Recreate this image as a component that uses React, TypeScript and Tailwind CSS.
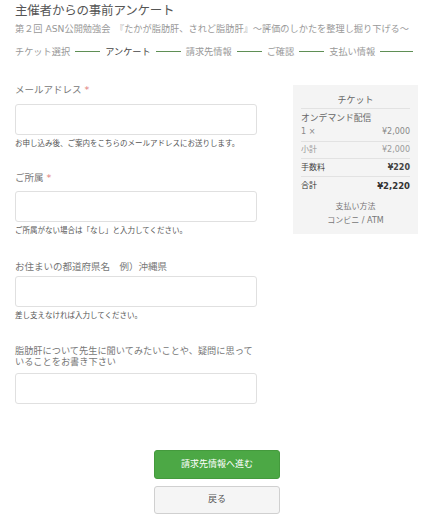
import React from 'react'

const font = { fontFamily: '"DejaVu Sans", "Noto Sans CJK JP", sans-serif' }

function Field({
  label,
  required,
  help,
  className,
  labelClass,
  inputClass,
}: {
  label: React.ReactNode
  required?: boolean
  help?: string
  className?: string
  labelClass?: string
  inputClass?: string
}) {
  return (
    <div className={className}>
      <div className={`text-[#777] ${labelClass ?? 'text-[9.5px] leading-[12px]'}`}>
        {label}
        {required && <span className="ml-[3px] text-[#e07a7a]">*</span>}
      </div>
      <div className={`h-[31px] w-full rounded-[3px] border border-[#e0e0e0] bg-white ${inputClass ?? ''}`} />
      {help && <div className="mt-[4px] text-[7.5px] leading-[10px] text-[#555]">{help}</div>}
    </div>
  )
}

function Step({ label, active }: { label: string; active?: boolean }) {
  return <span className={active ? 'text-[#444]' : 'text-[#999]'}>{label}</span>
}

function Line({ grow }: { grow?: boolean }) {
  return <span className={`h-px bg-[#5f8f55] ${grow ? 'flex-1' : 'w-[25px]'}`} />
}

export default function App() {
  return (
    <div className="min-h-[520px] w-[428px] bg-white text-[#666]" style={font}>
      {/* header */}
      <div className="px-[15px] pt-[4px]">
        <h1 className="text-[12.5px] font-normal leading-[14px] tracking-[-0.2px] text-[#555]">主催者からの事前アンケート</h1>
        <p className="mt-[5px] text-[9.2px] leading-[11px] text-[#999]">
          第２回 ASN公開勉強会　『たかが脂肪肝、されど脂肪肝』～評価のしかたを整理し掘り下げる～
        </p>
        <div className="mt-[12px] flex items-center gap-[5px] text-[9.2px] leading-[11px]">
          <Step label="チケット選択" />
          <Line />
          <Step label="アンケート" active />
          <Line />
          <Step label="請求先情報" />
          <Line />
          <Step label="ご確認" />
          <Line />
          <Step label="支払い情報" />
          <Line grow />
        </div>
      </div>

      {/* body */}
      <div className="mt-[27px] flex pl-[15px]">
        <div className="w-[242px]">
          <Field
            label="メールアドレス"
            required
            help="お申し込み後、ご案内をこちらのメールアドレスにお送りします。"
            inputClass="mt-[8px] h-[30px]"
          />
          <Field
            className="mt-[23px]"
            label="ご所属"
            required
            help="ご所属がない場合は「なし」と入力してください。"
            inputClass="mt-[7px]"
          />
          <Field
            className="mt-[25px]"
            label="お住まいの都道府県名　例）沖縄県"
            help="差し支えなければ入力してください。"
            inputClass="mt-[3px]"
          />
          <Field
            className="mt-[24px]"
            label={
              <>
                脂肪肝について先生に聞いてみたいことや、疑問に思って
                <br />
                いることをお書き下さい
              </>
            }
            labelClass="text-[9.2px] leading-[11px] whitespace-nowrap"
            inputClass="mt-[6px]"
          />
        </div>

        {/* summary */}
        <div className="ml-[36px] mt-[1px] h-fit w-[125px] bg-[#f4f4f4] px-[8px] pb-[7px] pt-[9px] text-[8px] leading-[12px] text-[#666]">
          <div className="border-b border-[#e2e2e2] pb-[2px] text-center text-[9px]">チケット</div>
          <div className="border-b border-[#e2e2e2] pb-[3px] pt-[3px]">
            <div className="text-[8.8px] text-[#666]">オンデマンド配信</div>
            <div className="mt-[2px] flex justify-between text-[#888]">
              <span>1 ×</span>
              <span>¥2,000</span>
            </div>
          </div>
          <div className="flex justify-between border-b border-[#e2e2e2] pb-[2px] pt-[2px] text-[#999]">
            <span>小計</span>
            <span>¥2,000</span>
          </div>
          <div className="flex justify-between border-b border-[#e2e2e2] pb-[2px] pt-[3px] text-[#444]">
            <span>手数料</span>
            <span className="font-bold">¥220</span>
          </div>
          <div className="flex justify-between pt-[3px] text-[#333]">
            <span>合計</span>
            <span className="text-[8.5px] font-bold">¥2,220</span>
          </div>
          <div className="mt-[9px] text-center text-[#777]">支払い方法</div>
          <div className="mt-[2px] text-center text-[#777]">コンビニ / ATM</div>
        </div>
      </div>

      {/* actions */}
      <div className="mt-[46px] flex flex-col items-center pl-[6px]">
        <button className="h-[29px] w-[126px] rounded-[3px] border border-[#449a3d] bg-[#4ca845] text-[9px] text-white">
          請求先情報へ進む
        </button>
        <button className="mt-[7px] h-[28px] w-[126px] rounded-[3px] border border-[#d0d0d0] bg-[#f5f5f5] text-[9px] text-[#555]">
          戻る
        </button>
      </div>
    </div>
  )
}
